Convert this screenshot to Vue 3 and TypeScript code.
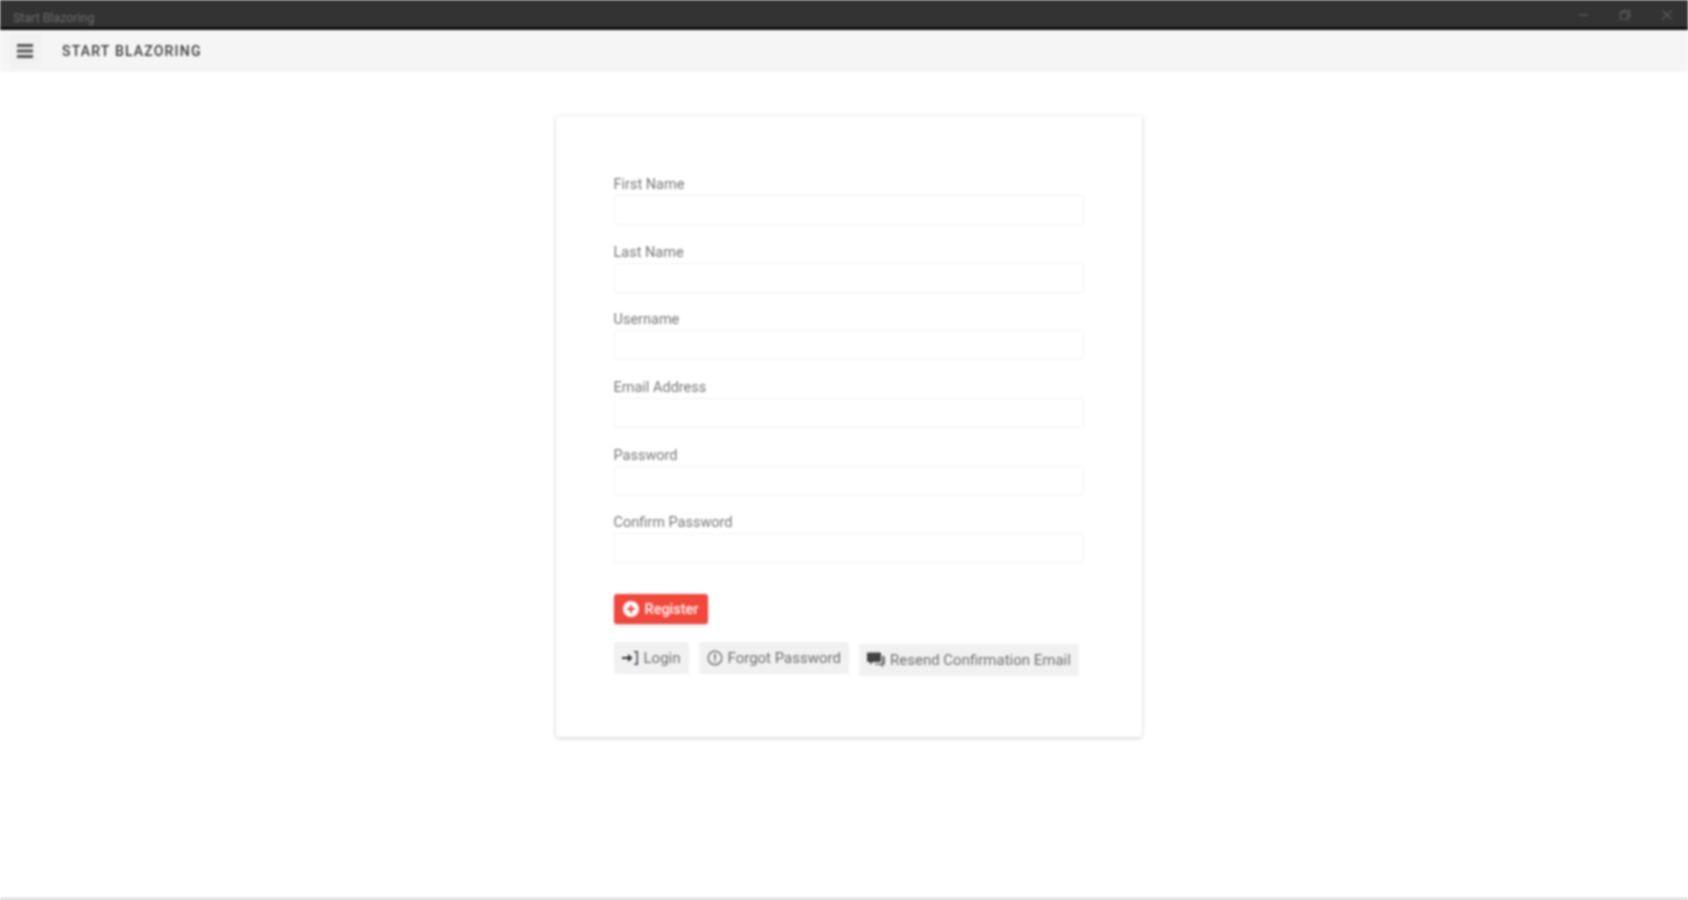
<template>
  <div class="window">
    <div class="title-bar">
      <span class="title-text">Start Blazoring</span>
      <div class="window-controls">
        <svg width="12" height="12" viewBox="0 0 12 12"><path d="M1 6h10" /></svg>
        <svg width="12" height="12" viewBox="0 0 12 12"><path d="M1.5 3.5h7v7h-7zM3.5 3.5v-2h7v7h-2" /></svg>
        <svg width="12" height="12" viewBox="0 0 12 12"><path d="M1.5 1.5l9 9M10.5 1.5l-9 9" /></svg>
      </div>
    </div>

    <header class="app-bar">
      <button class="menu-btn" type="button" aria-label="Menu">
        <svg width="16" height="14" viewBox="0 0 16 14"><path d="M0 0h16v3H0zM0 5.5h16v3H0zM0 11h16v3H0z" /></svg>
      </button>
      <span class="app-name">Start Blazoring</span>
    </header>

    <main class="content">
      <form class="card" @submit.prevent>
        <div class="fields">
          <label v-for="field in fields" :key="field.label" class="field">
            <span class="field-label">{{ field.label }}</span>
            <input class="field-input" :type="field.type" />
          </label>
        </div>

        <button class="btn btn-register" type="submit">
          <svg width="16" height="16" viewBox="0 0 16 16">
            <path fill="#fff" fill-rule="evenodd" d="M8 0a8 8 0 1 1 0 16A8 8 0 0 1 8 0zM7 4v3H4v2h3v3h2V9h3V7H9V4z" />
          </svg>
          Register
        </button>

        <div class="links">
          <button class="btn btn-link" type="button">
            <svg width="17" height="16" viewBox="0 0 17 16">
              <path fill="#333" d="M0 7h6V4l4.5 4L6 12V9H0z" />
              <path fill="#445" d="M12 1h4v14h-4v-1.500h2.500v-11H12z" />
            </svg>
            Login
          </button>
          <button class="btn btn-link" type="button">
            <svg width="16" height="16" viewBox="0 0 16 16">
              <circle cx="8" cy="8" r="6.800" fill="none" stroke="#666" stroke-width="1.300" />
              <path fill="#666" d="M7.200 3.800h1.600v5.400H7.200zM7.200 10.400h1.600v1.700H7.200z" />
            </svg>
            Forgot Password
          </button>
          <button class="btn btn-link btn-resend" type="button">
            <svg width="18" height="18" viewBox="0 0 18 18">
              <path fill="#444" d="M1 1.500h12a1 1 0 0 1 1 1V10a1 1 0 0 1-1 1H6l-3 2.500V11H1a1 1 0 0 1-1-1V2.500a1 1 0 0 1 1-1z" />
              <path fill="#777" d="M15 5h2a1 1 0 0 1 1 1v7a1 1 0 0 1-1 1h-1v2.500L13 14H8v-1.500h6a1 1 0 0 0 1-1z" />
            </svg>
            Resend Confirmation Email
          </button>
        </div>
      </form>
    </main>
  </div>
</template>

<script setup lang="ts">
interface Field {
  label: string;
  type: string;
}

const fields: Field[] = [
  { label: 'First Name', type: 'text' },
  { label: 'Last Name', type: 'text' },
  { label: 'Username', type: 'text' },
  { label: 'Email Address', type: 'email' },
  { label: 'Password', type: 'password' },
  { label: 'Confirm Password', type: 'password' },
];
</script>

<style>
html,
body {
  background: #fff;
  overflow: hidden;
}
</style>

<style scoped>
.window {
  display: flex;
  flex-direction: column;
  height: 900px;
  box-sizing: border-box;
  border-bottom: 2px solid #d0d0d0;
  background: #fff;
  font-family: Roboto, "Liberation Sans", sans-serif;
  filter: blur(1px);
}

.title-bar {
  display: flex;
  align-items: center;
  justify-content: space-between;
  height: 25px;
  padding: 2px 15px 0 13px;
  background: #333;
  border-bottom: 3px solid #0c0c0c;
}

.title-text {
  margin-top: 6px;
  font-size: 12.400px;
  color: #6c6c6c;
}

.window-controls {
  display: flex;
  gap: 30px;
}

.window-controls path {
  fill: none;
  stroke: #5c5c5c;
  stroke-width: 1.200;
}

.app-bar {
  display: flex;
  align-items: center;
  height: 42px;
  padding-left: 9px;
  background: #f5f5f5;
}

.menu-btn {
  display: flex;
  align-items: center;
  justify-content: center;
  width: 32px;
  height: 34px;
  margin-right: 21px;
  padding: 0;
  border: 0;
  border-radius: 4px;
  background: #f1f1f1;
}

.menu-btn path {
  fill: #555;
}

.app-name {
  font-size: 14px;
  font-weight: 500;
  letter-spacing: 1.200px;
  text-transform: uppercase;
  color: #3c3c3c;
}

.content {
  display: flex;
  justify-content: center;
  flex: 1;
  padding: 44px 0 0 9px;
}

.card {
  display: flex;
  flex-direction: column;
  align-items: flex-start;
  box-sizing: border-box;
  width: 586px;
  height: 621px;
  padding: 57px 58px 0;
  border-radius: 3px;
  background: #fff;
  box-shadow: 0 1px 4px rgba(0, 0, 0, 0.2);
}

.fields {
  display: flex;
  flex-direction: column;
  gap: 15.700px;
  width: 100%;
  margin-bottom: 31px;
}

.field {
  display: flex;
  flex-direction: column;
}

.field-label {
  height: 22px;
  line-height: 23px;
  font-size: 14.500px;
  color: #777;
}

.field-input {
  box-sizing: border-box;
  width: 100%;
  height: 30px;
  border: 1px solid #f4f4f4;
  border-radius: 3px;
  background: #fff;
  outline: none;
}

.btn {
  display: inline-flex;
  align-items: center;
  gap: 5px;
  box-sizing: border-box;
  padding: 0 8px;
  border: 0;
  border-radius: 3px;
  font-family: inherit;
  font-size: 15px;
  white-space: nowrap;
}

.btn-register {
  height: 30px;
  padding: 0 9px;
  gap: 6px;
  background: #f4473c;
  color: #fff;
  font-size: 14.500px;
  font-weight: 500;
  box-shadow: 0 1px 2px rgba(0, 0, 0, 0.2);
}

.links {
  display: flex;
  align-items: flex-start;
  gap: 10px;
  margin-top: 18px;
}

.btn-link {
  height: 32px;
  background: #f1f1f1;
  color: #6f6f6f;
}

.btn-resend {
  margin-top: 2px;
}
</style>
